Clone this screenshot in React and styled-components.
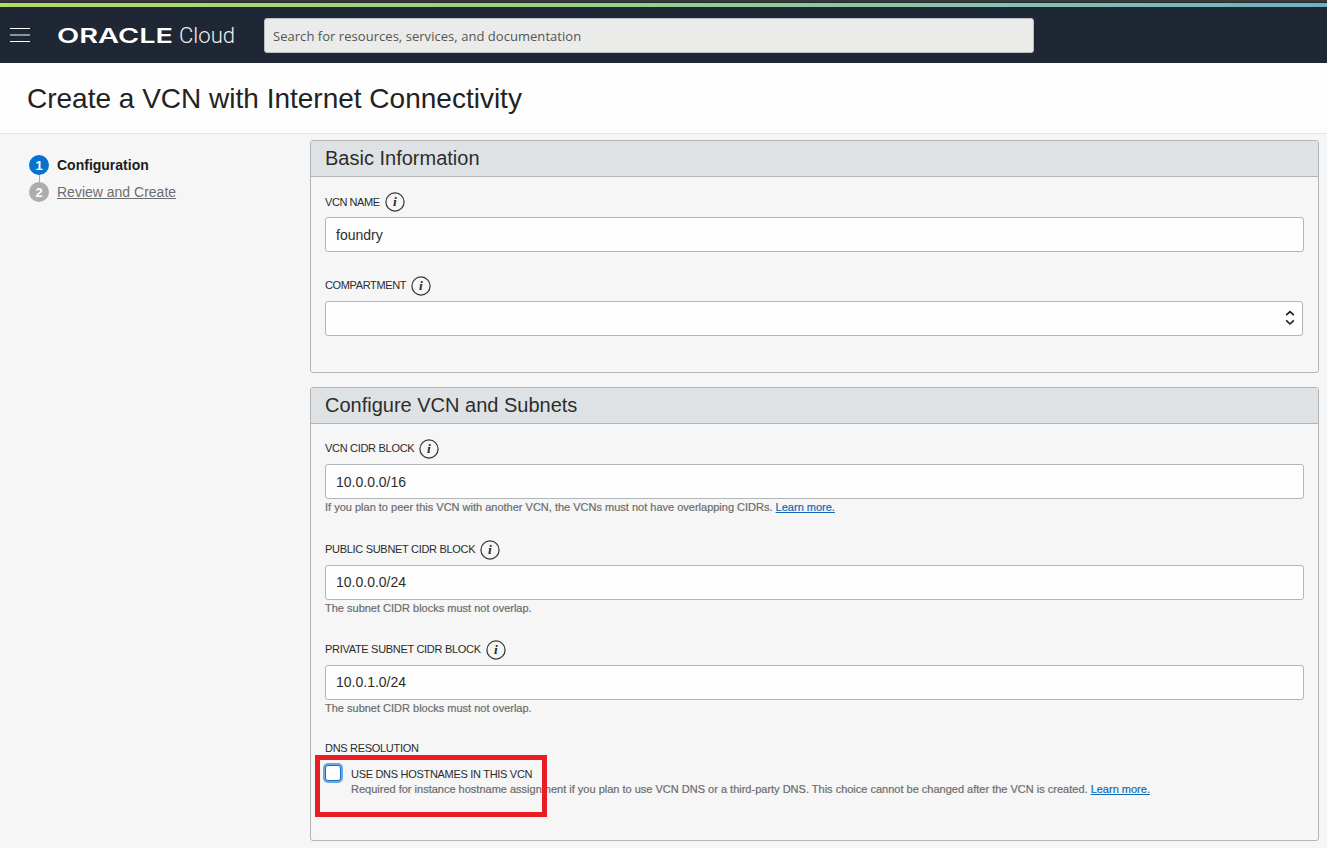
import React from "react";
import styled, { createGlobalStyle, css } from "styled-components";

const GlobalStyle = createGlobalStyle`
  * { box-sizing: border-box; }
  body {
    margin: 0;
    background: #f6f6f6;
    color: #2b2b2b;
    font-family: "Liberation Sans", Arial, sans-serif;
    font-size: 14px;
    overflow: hidden;
  }
`;

const Page = styled.div`
  display: flex;
  flex-direction: column;
  height: 848px;
`;

const TopStrip = styled.div`
  height: 3px;
  background: linear-gradient(90deg, #373435, #363c3b);
  border-bottom: 1px solid #262b31;
`;

const AccentBar = styled.div`
  height: 4px;
  background: linear-gradient(90deg, #b1dc65 0%, #98d088 45%, #86c3b0 75%, #72afc4 100%);
`;

const Header = styled.header`
  display: flex;
  align-items: center;
  height: 56px;
  padding-left: 10px;
  background: #1e2733;
`;

const MenuButton = styled.button`
  display: flex;
  flex-direction: column;
  gap: 5px;
  width: 20px;
  padding: 0;
  border: 0;
  background: none;
`;

const MenuLine = styled.span`
  height: ${(p) => (p.$dim ? 2 : 1)}px;
  background: ${(p) => (p.$dim ? "#8d9299" : "#ffffff")};
`;

const Brand = styled.svg`
  margin-left: 27px;
  flex: none;
`;

const SearchInput = styled.input`
  width: 770px;
  height: 35px;
  margin-left: 27px;
  padding: 2px 8px 0;
  border: 1px solid #b9bfc9;
  border-radius: 3px;
  background: #ebebea;
  font-family: "Open Sans", "Noto Sans", sans-serif;
  font-size: 13px;
  letter-spacing: 0.04px;
  color: #555;
  &::placeholder { color: #555; opacity: 1; }
`;

const TitleBar = styled.div`
  display: flex;
  align-items: center;
  height: 71px;
  padding: 2px 0 0 27px;
  border-bottom: 1px solid #e2e5e5;
  background: #fdfdfd;
`;

const Title = styled.h1`
  margin: 0;
  font-size: 28px;
  font-weight: 400;
  color: #222;
`;

const Body = styled.div`
  display: flex;
  flex: 1;
`;

const Steps = styled.ol`
  width: 310px;
  margin: 0;
  padding: 21px 0 0 29px;
  list-style: none;
`;

const Step = styled.li`
  display: flex;
  align-items: center;
  gap: 8px;
  height: 20px;
`;

const StepName = styled.span`
  font-size: 14px;
  color: ${(p) => (p.$active ? "#1c1c1c" : "#6e6e6e")};
  font-weight: ${(p) => (p.$active ? 700 : 400)};
  text-decoration: ${(p) => (p.$active ? "none" : "underline")};
`;

const StepNumber = styled.span`
  display: inline-flex;
  align-items: center;
  justify-content: center;
  width: 20px;
  height: 20px;
  border-radius: 50%;
  background: ${(p) => (p.$active ? "#0572ce" : "#adadad")};
  color: #fff;
  font-size: 13px;
  font-weight: 700;
`;

const StepLine = styled.li`
  width: 1px;
  height: 7px;
  margin-left: 10px;
  background: #a9a9a9;
`;

const Content = styled.main`
  display: flex;
  flex-direction: column;
  gap: 14px;
  width: 1009px;
  padding-top: 6px;
`;

const Panel = styled.section`
  height: ${(p) => p.$height}px;
  border: 1px solid #b1b5b7;
  border-radius: 3px;
`;

const PanelTitle = styled.h2`
  display: flex;
  align-items: center;
  height: 36px;
  margin: 0;
  padding: 0 14px 1px;
  border-bottom: 1px solid #b1b5b7;
  border-radius: 2px 2px 0 0;
  background: #dfe2e4;
  font-size: 20px;
  font-weight: 400;
  color: #2d2d2d;
`;

const PanelBody = styled.div`
  display: flex;
  flex-direction: column;
  padding: 15px 14px 0;
`;

const Field = styled.div`
  height: ${(p) => p.$height}px;
`;

const Label = styled.label`
  font-size: 11px;
  line-height: 14px;
  letter-spacing: ${(p) => p.$tracking ?? -0.3}px;
  padding-bottom: ${(p) => p.$lift ?? 0}px;
  color: #2b2b2b;
`;

const LabelRow = styled.div`
  display: flex;
  align-items: center;
  gap: 5px;
  height: 20px;
  margin-bottom: 5px;
`;

const controlBox = css`
  height: 35px;
  border: 1px solid #b3b6b8;
  border-radius: 3px;
  background: #fefefe;
`;

const TextInput = styled.input`
  ${controlBox}
  display: block;
  width: 979px;
  padding: ${(p) => (p.$raised ? "0 10px 1px" : "1px 10px 0")};
  font-family: inherit;
  font-size: 14px;
  color: #2d2d2d;
`;

const SelectBox = styled.div`
  ${controlBox}
  display: flex;
  align-items: center;
  justify-content: flex-end;
  width: 978px;
  padding: 0 7px 2px 0;
`;

const Hint = styled.p`
  margin: ${(p) => p.$top ?? 2}px 0 0;
  font-size: 11px;
  line-height: 13px;
  color: #6c6c6c;
  -webkit-text-stroke: 0.2px #6c6c6c;
  white-space: nowrap;
`;

const HintLink = styled.a`
  color: #0f69b8;
  -webkit-text-stroke-color: #0f69b8;
  text-decoration: underline;
`;

const CheckRow = styled.div`
  position: relative;
  display: flex;
  align-items: flex-start;
  gap: 10px;
  padding-top: 9px;
`;

const CheckText = styled.div`
  display: flex;
  flex-direction: column;
  padding-top: 3px;
`;

const Checkbox = styled.span`
  flex: none;
  width: 16px;
  height: 16px;
  margin-top: 1px;
  border: 1px solid #1a6fc0;
  border-radius: 3px;
  background: #fff;
  box-shadow: 0 0 0 2px #6ba6e2;
`;

const Highlight = styled.div`
  position: absolute;
  top: 0;
  left: -10px;
  width: 232px;
  height: 62px;
  border: 5px solid #ea1c24;
`;

const InfoIcon = () => (
  <svg width="20" height="20" viewBox="0 0 20 20" fill="none">
    <circle cx="10" cy="10" r="9.1" stroke="#333" strokeWidth="1.2" />
    <text x="10" y="14.2" textAnchor="middle" fontFamily="Liberation Serif, serif" fontStyle="italic" fontWeight="700" fontSize="13.5" fill="#2b2b2b">i</text>
  </svg>
);

const SortIcon = () => (
  <svg width="10" height="16" viewBox="0 0 10 16" fill="none" stroke="#1c1c1c" strokeWidth="1.6">
    <path d="M1.2 5.2 5 1.6l3.8 3.6M1.2 10.4 5 14l3.8-3.6" />
  </svg>
);

const OracleCloud = () => (
  <Brand width="180" height="28" viewBox="0 0 180 28">
    <text x="0" y="21.7" fontFamily="Inter, sans-serif" fontWeight="600" fontSize="20" fill="#fff" textLength="116" lengthAdjust="spacingAndGlyphs">ORACLE</text>
    <text x="122" y="22" fontFamily="Roboto, sans-serif" fontWeight="300" fontSize="22.5" fill="#eef0f2" textLength="56" lengthAdjust="spacingAndGlyphs">Cloud</text>
  </Brand>
);

function FormField({ label, tracking, lift = 2, height, hint, children }) {
  return (
    <Field $height={height}>
      <LabelRow>
        <Label $tracking={tracking} $lift={lift}>{label}</Label>
        <InfoIcon />
      </LabelRow>
      {children}
      {hint}
    </Field>
  );
}

export default function App() {
  return (
    <>
      <GlobalStyle />
      <Page>
        <TopStrip />
        <AccentBar />
        <Header>
          <MenuButton aria-label="Menu">
            <MenuLine />
            <MenuLine $dim />
            <MenuLine />
          </MenuButton>
          <OracleCloud />
          <SearchInput placeholder="Search for resources, services, and documentation" />
        </Header>
        <TitleBar>
          <Title>Create a VCN with Internet Connectivity</Title>
        </TitleBar>
        <Body>
          <Steps>
            <Step>
              <StepNumber $active>1</StepNumber>
              <StepName $active>Configuration</StepName>
            </Step>
            <StepLine />
            <Step>
              <StepNumber>2</StepNumber>
              <StepName>Review and Create</StepName>
            </Step>
          </Steps>
          <Content>
            <Panel $height={233}>
              <PanelTitle>Basic Information</PanelTitle>
              <PanelBody>
                <FormField label="VCN NAME" tracking={-0.42} lift={0} height={84}>
                  <TextInput defaultValue="foundry" />
                </FormField>
                <FormField label="COMPARTMENT" tracking={-0.36} height={60}>
                  <SelectBox>
                    <SortIcon />
                  </SelectBox>
                </FormField>
              </PanelBody>
            </Panel>
            <Panel $height={454}>
              <PanelTitle>Configure VCN and Subnets</PanelTitle>
              <PanelBody>
                <FormField
                  label="VCN CIDR BLOCK"
                  height={101}
                  hint={
                    <Hint>
                      If you plan to peer this VCN with another VCN, the VCNs must not have overlapping CIDRs.{" "}
                      <HintLink>Learn more.</HintLink>
                    </Hint>
                  }
                >
                  <TextInput defaultValue="10.0.0.0/16" />
                </FormField>
                <FormField
                  label="PUBLIC SUBNET CIDR BLOCK"
                  height={100}
                  hint={<Hint>The subnet CIDR blocks must not overlap.</Hint>}
                >
                  <TextInput $raised defaultValue="10.0.0.0/24" />
                </FormField>
                <FormField
                  label="PRIVATE SUBNET CIDR BLOCK"
                  height={101}
                  hint={<Hint>The subnet CIDR blocks must not overlap.</Hint>}
                >
                  <TextInput $raised defaultValue="10.0.1.0/24" />
                </FormField>
                <Label>DNS RESOLUTION</Label>
                <CheckRow>
                  <Checkbox />
                  <CheckText>
                    <Label>USE DNS HOSTNAMES IN THIS VCN</Label>
                    <Hint $top={2}>
                      Required for instance hostname assignment if you plan to use VCN DNS or a third-party DNS. This
                      choice cannot be changed after the VCN is created. <HintLink>Learn more.</HintLink>
                    </Hint>
                  </CheckText>
                  <Highlight />
                </CheckRow>
              </PanelBody>
            </Panel>
          </Content>
        </Body>
      </Page>
    </>
  );
}
